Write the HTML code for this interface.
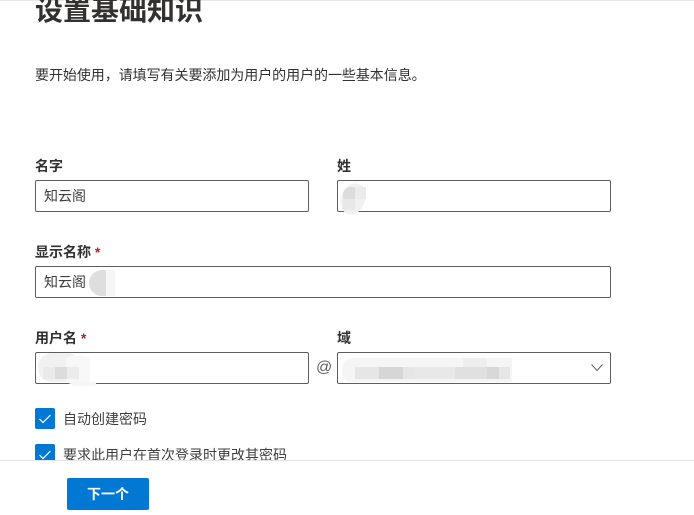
<!DOCTYPE html>
<html lang="zh">
<head>
<meta charset="utf-8">
<style>
html,body{margin:0;padding:0;background:#fff}
#root{position:relative;width:694px;height:515px;overflow:hidden;background:#fff;font-family:"Liberation Sans","Noto Sans CJK SC",sans-serif;color:#323130}
.t{position:absolute;white-space:nowrap}
.h{left:35px;top:-9px;font-size:28px;font-weight:700;line-height:40px;color:#323130}
.d{left:35px;top:65px;font-size:14px;line-height:20px;letter-spacing:-0.05px}
.l{font-size:14px;font-weight:600;line-height:20px;color:#323130}
.s{color:#a4262c;margin-left:0}
.i{position:absolute;box-sizing:border-box;height:32px;border:1px solid #605e5c;border-radius:2px;background:#fff}
.v{font-size:14px;line-height:20px;color:#3f3e3d}
.b{position:absolute;background:#d8d8d8}
.c{position:absolute;left:35px;width:20px;height:21px;border-radius:2px;background:#0078d4}
.c svg{position:absolute;left:3px;top:4px}
#foot{position:absolute;left:0;top:460px;width:694px;height:55px;background:#fff;border-top:1px solid #e6e6e6;box-sizing:border-box}
#btn{position:absolute;left:67px;top:478px;width:82px;height:32px;background:#0078d4;border-radius:2px;color:#fff;font-size:14px;font-weight:600;line-height:32px;text-align:center}
</style>
</head>
<body>
<div id="root">
<div style="position:absolute;left:0;top:0;width:694px;height:1px;background:#e8e8e8"></div>
<div class="t h">设置基础知识</div>
<div class="t d">要开始使用，请填写有关要添加为用户的用户的一些基本信息。</div>

<div class="t l" style="left:35px;top:156px">名字</div>
<div class="i" style="left:35px;top:180px;width:274px"></div>
<div class="t v" style="left:44px;top:186px">知云阁</div>

<div class="t l" style="left:337px;top:156px">姓</div>
<div class="i" style="left:337px;top:180px;width:274px"></div>
<div class="b" style="left:341px;top:183px;width:24px;height:32px;border-radius:50% 45% 50% 50%;background:#f1f1f1;transform:rotate(18deg)"></div>
<div class="b" style="left:343px;top:187px;width:12px;height:12px;background:#dcdcdc;border-radius:8px 0 0 0"></div>
<div class="b" style="left:355px;top:187px;width:11px;height:12px;background:#ebebeb"></div>
<div class="b" style="left:343px;top:199px;width:12px;height:11px;background:#e8e8e8"></div>

<div class="t l" style="left:35px;top:242px">显示名称 <span class="s">*</span></div>
<div class="i" style="left:35px;top:266px;width:576px"></div>
<div class="t v" style="left:44px;top:272px">知云阁</div>
<div class="b" style="left:89px;top:270px;width:17px;height:26px;background:#dedede;border-radius:13px 0 0 13px"></div>
<div class="b" style="left:106px;top:270px;width:9px;height:26px;background:#f6f6f6"></div>

<div class="t l" style="left:35px;top:328px">用户名 <span class="s">*</span></div>
<div class="i" style="left:35px;top:352px;width:274px"></div>
<div class="b" style="left:38px;top:353px;width:40px;height:29px;background:#f1f1f1;border-radius:14px 10px 14px 14px"></div>
<div class="b" style="left:66px;top:356px;width:24px;height:28px;background:#f8f8f8;border-radius:6px"></div>
<div class="b" style="left:43px;top:367px;width:12px;height:12px;background:#eaeaea"></div>
<div class="b" style="left:55px;top:367px;width:12px;height:12px;background:#dcdcdc"></div>
<div class="b" style="left:67px;top:367px;width:12px;height:12px;background:#ececec"></div>
<div class="b" style="left:72px;top:382px;width:24px;height:4px;background:#f6f6f6;border-radius:3px"></div>

<div class="t" style="left:316px;top:358px;font-size:16px;line-height:20px;color:#605e5c">@</div>

<div class="t l" style="left:337px;top:328px">域</div>
<div class="i" style="left:337px;top:352px;width:274px"></div>
<div class="b" style="left:342px;top:358px;width:170px;height:24px;background:#f5f5f5;border-radius:10px 0 0 10px"></div>
<div class="b" style="left:355px;top:367px;width:155px;height:12px;background:#e6e6e6"></div>
<div class="b" style="left:379px;top:367px;width:24px;height:12px;background:#d6d6d6"></div>
<div class="b" style="left:415px;top:367px;width:40px;height:12px;background:#e8e8e8"></div>
<div class="b" style="left:455px;top:367px;width:36px;height:12px;background:#e0e0e0"></div>
<div class="b" style="left:487px;top:367px;width:12px;height:12px;background:#d8d8d8"></div>
<div class="b" style="left:463px;top:358px;width:24px;height:9px;background:#eeeeee"></div>
<svg style="position:absolute;left:590px;top:362px" width="14" height="12" viewBox="0 0 14 12"><path d="M1.5 2.5 L7 8.5 L12.5 2.5" fill="none" stroke="#605e5c" stroke-width="1"/></svg>

<div class="c" style="top:408px"><svg width="14" height="13" viewBox="0 0 14 13"><path d="M1.5 7 L5 10.5 L12.5 3" fill="none" stroke="#fff" stroke-width="1.2"/></svg></div>
<div class="t v" style="left:63px;top:409px">自动创建密码</div>
<div class="c" style="top:444px"><svg width="14" height="13" viewBox="0 0 14 13"><path d="M1.5 7 L5 10.5 L12.5 3" fill="none" stroke="#fff" stroke-width="1.2"/></svg></div>
<div class="t v" style="left:63px;top:445px">要求此用户在首次登录时更改其密码</div>

<div id="foot"></div>
<div id="btn">下一个</div>
</div>
</body>
</html>
